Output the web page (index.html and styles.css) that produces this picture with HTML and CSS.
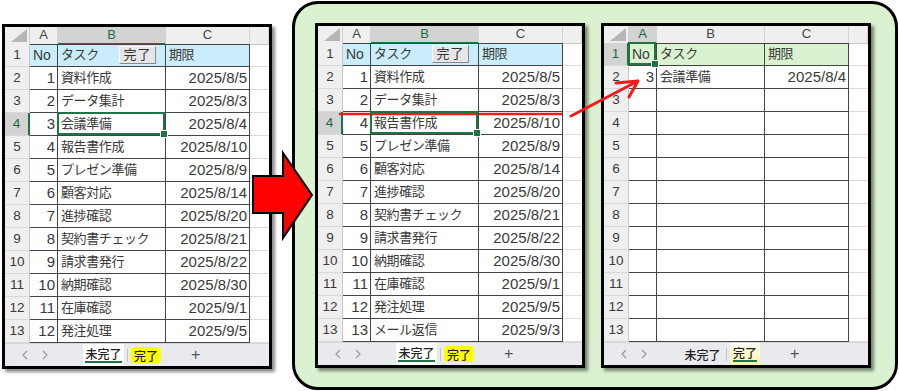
FILE: index.html
```html
<!DOCTYPE html>
<html lang="ja">
<head>
  <meta charset="UTF-8" />
  <title>タスク管理 - 完了の移動</title>
  <link rel="stylesheet" href="styles.css">
</head>
<body>

  <div class="sheet before" id="sheet-before"></div>

  <div class="panel">
    <div class="sheet" id="sheet-after"></div>
    <div class="sheet done" id="sheet-done"></div>
  </div>

  <svg class="marks" width="899" height="391" viewBox="0 0 899 391">
    <polygon points="253,176 283,176 283,153 312,195 283,238 283,213 253,213" fill="#ff0000" stroke="#000" stroke-width="2"/>
    <path d="M339 114 L562 114" stroke="#f21b1b" stroke-width="2.5" fill="none"/>
    <path d="M571 116 L638 81 M616 83 L638 81 L629 97" stroke="#f21b1b" stroke-width="3" fill="none" stroke-linecap="round" stroke-linejoin="round"/>
  </svg>

  <script>
    const allTasks = [
      [1, '資料作成', '2025/8/5'],
      [2, 'データ集計', '2025/8/3'],
      [3, '会議準備', '2025/8/4'],
      [4, '報告書作成', '2025/8/10'],
      [5, 'プレゼン準備', '2025/8/9'],
      [6, '顧客対応', '2025/8/14'],
      [7, '進捗確認', '2025/8/20'],
      [8, '契約書チェック', '2025/8/21'],
      [9, '請求書発行', '2025/8/22'],
      [10, '納期確認', '2025/8/30'],
      [11, '在庫確認', '2025/9/1'],
      [12, '発注処理', '2025/9/5'],
      [13, 'メール返信', '2025/9/3']
    ];

    function el(cls, text) {
      const d = document.createElement('div');
      d.className = cls;
      if (text !== undefined && text !== '') d.textContent = text;
      return d;
    }

    function chevron(dir) {
      const d = dir === 'left' ? 'M6 1 2 5l4 4' : 'M2 1l4 4-4 4';
      return '<svg class="chev" viewBox="0 0 8 10"><path d="' + d + '" fill="none" stroke="#9a9a9a" stroke-width="1.2"/></svg>';
    }

    function buildSheet(id, opts) {
      const sheet = document.getElementById(id);

      // column letters
      const head = el('row colhead');
      head.append(el('corner'));
      ['A', 'B', 'C'].forEach(l => head.append(el('ch' + (l === opts.selCol ? ' sel' : ''), l)));
      head.append(el('ch'));
      sheet.append(head);

      for (let r = 1; r <= 13; r++) {
        const row = el('row');
        row.append(el('rh' + (r === opts.selRow ? ' sel' : ''), String(r)));

        let a, b, c;
        if (r === 1) {
          a = el('c hd ' + opts.fill, 'No');
          b = el('c txt ' + opts.fill, 'タスク');
          c = el('c txt ' + opts.fill, '期限');
          [a, b, c].forEach(x => x.classList.add('top'));
          if (opts.button) {
            b.classList.add('has-btn');
            b.innerHTML = '<span>タスク</span><span class="btn">完了</span>';
          }
        } else {
          const t = opts.rows[r - 2] || ['', '', ''];
          a = el('c num', t[0] === '' ? '' : String(t[0]));
          b = el('c txt', t[1]);
          c = el('c num', t[2]);
        }

        const cells = { A: a, B: b, C: c };
        if (opts.selCell && opts.selCell[0] === r) cells[opts.selCell[1]].classList.add('sel');

        row.append(a, b, c, el('x'));
        sheet.append(row);
      }

      const tabs = el('tabs');
      tabs.innerHTML =
        chevron('left') + chevron('right') +
        '<div class="tab tab-todo' + (opts.active === 'todo' ? ' active' : '') + '"><span>未完了</span></div>' +
        '<div class="sep"></div>' +
        '<div class="tab tab-done' + (opts.active === 'done' ? ' active' : ' mark') + '"><span>完了</span></div>' +
        '<div class="plus">+</div>';
      sheet.append(tabs);
    }

    buildSheet('sheet-before', {
      rows: allTasks.slice(0, 12), fill: 'blue', button: true,
      selCol: 'B', selRow: 4, selCell: [4, 'B'], active: 'todo'
    });

    buildSheet('sheet-after', {
      rows: allTasks.filter(t => t[0] !== 3), fill: 'blue', button: true,
      selCol: 'B', selRow: 4, selCell: [4, 'B'], active: 'todo'
    });

    buildSheet('sheet-done', {
      rows: [allTasks[2]], fill: 'green', button: false,
      selCol: 'A', selRow: 1, selCell: [1, 'A'], active: 'done'
    });
  </script>

</body>
</html>
```

FILE: styles.css
```css
* {
  box-sizing: border-box;
  margin: 0;
  padding: 0;
}

body {
  width: 899px;
  height: 391px;
  overflow: hidden;
  position: relative;
  display: flex;
  align-items: flex-start;
  background: #fff;
  color: #333;
  font-family: "Liberation Sans", "Noto Sans CJK JP", sans-serif;
}

.sheet {
  flex: none;
  width: 270px;
  background: #fff;
  border: 3px solid #000;
  box-shadow: 3px 3px 3px rgba(0, 0, 0, 0.45);
}

.before {
  margin: 24px 0 0 2px;
}

.panel {
  flex: none;
  display: flex;
  align-items: flex-start;
  gap: 16px;
  width: 606px;
  height: 389px;
  margin: 1px 0 0 20px;
  padding: 19px 0 0 20px;
  background: #daf2d0;
  border: 3px solid #000;
  border-radius: 26px;
}

/* grid */
.row {
  display: grid;
  grid-template-columns: 25px 28px 108px 84px 1fr;
  height: 23px;
}

.colhead {
  height: 17px;
}

.corner {
  display: flex;
  justify-content: flex-end;
  align-items: flex-end;
  padding: 0 2px 2px 0;
  background: #efefef;
  border-right: 1px solid #d0d0d0;
  border-bottom: 1px solid #c8c8c8;
}

.corner::before {
  content: "";
  width: 16px;
  height: 13px;
  background: #b6b6b6;
  clip-path: polygon(100% 0, 100% 100%, 0 100%);
}

.ch {
  background: #efefef;
  border-right: 1px solid #d4d4d4;
  border-bottom: 1px solid #c8c8c8;
  color: #444;
  font-size: 13px;
  line-height: 16px;
  text-align: center;
}

.ch.sel {
  background: #d3d3d3;
  color: #1d6b3d;
  border-bottom: 2px solid #217346;
}

.rh {
  background: #efefef;
  border-right: 1px solid #c8c8c8;
  border-bottom: 1px solid #d8d8d8;
  color: #3a3a3a;
  font-size: 13.5px;
  line-height: 22px;
  text-align: center;
}

.rh.sel {
  background: #d3d3d3;
  color: #1d6b3d;
  border-right: 2px solid #217346;
}

.c {
  position: relative;
  border-right: 1px solid #444;
  border-bottom: 1px solid #444;
  line-height: 22px;
  white-space: nowrap;
  color: #3a3a3a;
}

.num {
  padding-right: 2px;
  text-align: right;
  font-size: 15px;
}

.txt {
  padding-left: 3px;
  font-size: 13px;
  letter-spacing: -0.4px;
}

.hd {
  padding-left: 3px;
  font-size: 14px;
}

.top {
  box-shadow: inset 0 1px 0 #444;
}

.blue {
  background: #caedfb;
}

.green {
  background: #daf2d0;
}

.x {
  border-bottom: 1px solid #dcdcdc;
}

.has-btn {
  display: flex;
  justify-content: space-between;
  align-items: center;
}

.btn {
  width: 37px;
  height: 18px;
  margin-right: 9px;
  background: #e6e6e6;
  border: 1px solid;
  border-color: #fafafa #8a8a8a #8a8a8a #fafafa;
  font-size: 13px;
  line-height: 16px;
  letter-spacing: 1px;
  text-align: center;
  color: #333;
}

/* selected cell */
.c.sel {
  z-index: 1;
}

.c.sel::after {
  content: "";
  position: absolute;
  top: -1px;
  left: -1px;
  right: 0;
  bottom: 0;
  border: 2px solid #217346;
}

.c.sel::before {
  content: "";
  position: absolute;
  right: -3px;
  bottom: -3px;
  width: 6px;
  height: 6px;
  background: #217346;
  border: 1px solid #fff;
  z-index: 2;
}

/* sheet tabs */
.tabs {
  display: flex;
  align-items: center;
  height: 23px;
  padding-left: 16px;
  background: #e8eaed;
  border-top: 1px solid #d6d6d6;
  font-family: "Noto Sans CJK JP", sans-serif;
  font-size: 12px;
  font-weight: 500;
  color: #222;
}

.chev {
  width: 8px;
  height: 10px;
  margin-right: 12px;
}

.tab {
  display: flex;
  justify-content: center;
  align-items: center;
  height: 100%;
}

.tab-todo {
  width: 41px;
  margin-left: 22px;
}

.tab-done {
  width: 30px;
}

.sep {
  width: 1px;
  height: 13px;
  margin: 0 3px;
  background: #c4c4c4;
}

.tab.active {
  background: #fff;
}

.tab.active span {
  line-height: 14px;
  border-bottom: 2px solid #217346;
}

.tab.mark {
  height: 16px;
  background: #ffff00;
  border-radius: 3px;
}

.done .tab-done {
  background: linear-gradient(#fffef2, #faf3a8);
}

.plus {
  margin-left: 30px;
  font-family: "Liberation Sans", sans-serif;
  font-size: 16px;
  color: #555;
}

.marks {
  position: absolute;
  top: 0;
  left: 0;
  pointer-events: none;
}
```
